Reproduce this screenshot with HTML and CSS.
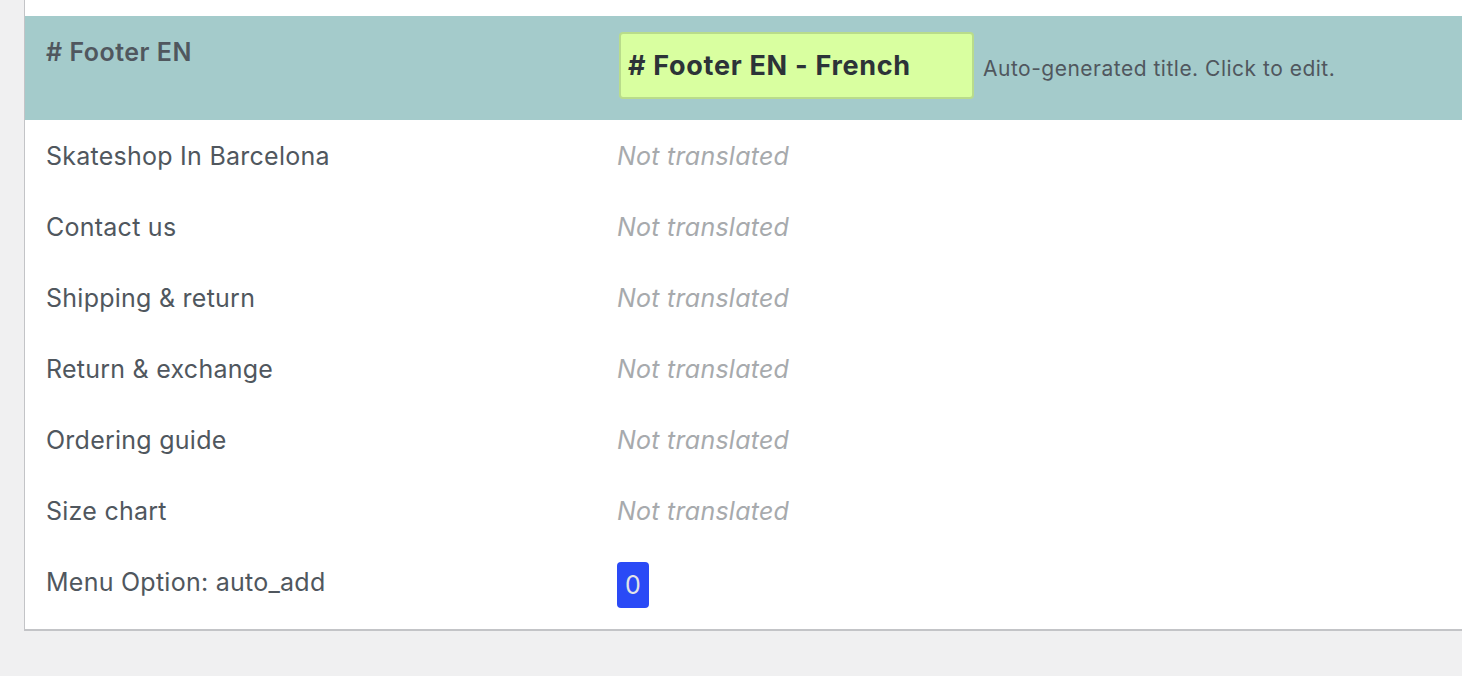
FILE: index.html
```html
<!DOCTYPE html>
<html lang="en">
<head>
    <meta charset="UTF-8">
    <title>Menu translation</title>
    <link rel="stylesheet" href="styles.css">
</head>
<body>
    <div class="table">
        <div class="row current">
            <div class="cell name"># Footer EN</div>
            <div class="cell value">
                <div class="title-input"># Footer EN - French</div>
                <span class="hint">Auto-generated title. Click to edit.</span>
            </div>
        </div>
        <div class="row">
            <div class="cell name">Skateshop In Barcelona</div>
            <div class="cell value"><span class="missing">Not translated</span></div>
        </div>
        <div class="row">
            <div class="cell name">Contact us</div>
            <div class="cell value"><span class="missing">Not translated</span></div>
        </div>
        <div class="row">
            <div class="cell name">Shipping &amp; return</div>
            <div class="cell value"><span class="missing">Not translated</span></div>
        </div>
        <div class="row">
            <div class="cell name">Return &amp; exchange</div>
            <div class="cell value"><span class="missing">Not translated</span></div>
        </div>
        <div class="row">
            <div class="cell name">Ordering guide</div>
            <div class="cell value"><span class="missing">Not translated</span></div>
        </div>
        <div class="row">
            <div class="cell name">Size chart</div>
            <div class="cell value"><span class="missing">Not translated</span></div>
        </div>
        <div class="row">
            <div class="cell name">Menu Option: auto_add</div>
            <div class="cell value"><span class="badge">0</span></div>
        </div>
    </div>
</body>
</html>
```

FILE: styles.css
```css
* {
    margin: 0;
    padding: 0;
    box-sizing: border-box;
}
body {
    background: #f0f0f1;
    font-family: Inter, "Noto Sans", sans-serif;
    color: #50575e;
    overflow: hidden;
    height: 676px;
}
.table {
    margin-left: 24px;
    width: 1460px;
    background: #fff;
    border-left: 1px solid #c3c4c7;
    border-bottom: 2px solid #c3c4c7;
    padding-top: 16px;
}
.row {
    display: grid;
    grid-template-columns: 592px 1fr;
}
.row.current {
    background: #a4cbcb;
}
.cell {
    padding: 16px 21px 15px 21px;
    font-size: 25px;
    letter-spacing: 0.25px;
    line-height: 40px;
}
.cell.value {
    padding: 16px 22px 15px 0;
    display: flex;
    align-items: flex-start;
}
.current .name {
    font-weight: 600;
    letter-spacing: 0.5px;
}
.title-input {
    margin: 0 0 6px 2px;
    width: 355px;
    height: 67px;
    padding: 0 7px;
    background: #d9ffa0;
    border: 2px solid #b9dc8b;
    border-radius: 4px;
    font-size: 27px;
    font-weight: 700;
    letter-spacing: 0.7px;
    line-height: 63px;
    color: #2c3338;
}
.hint {
    margin-left: 9px;
    margin-top: 21px;
    font-size: 21px;
    letter-spacing: 0.5px;
    line-height: 32px;
}
.missing {
    font-style: italic;
    color: #a7aaad;
}
.badge {
    display: inline-block;
    margin-bottom: 6px;
    width: 32px;
    height: 46px;
    line-height: 46px;
    letter-spacing: 0;
    text-align: center;
    background: #2a4af6;
    color: #e2e4e7;
    border-radius: 4px;
}
```
